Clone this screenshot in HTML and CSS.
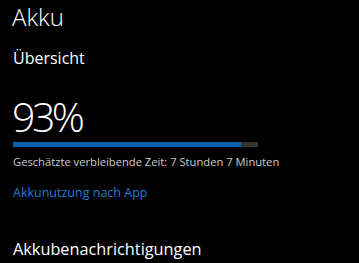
FILE: index.html
```html
<!DOCTYPE html>
<html lang="de">
<head>
<meta charset="utf-8">
<link rel="stylesheet" href="styles.css">
</head>
<body>
<main class="page">
  <h1 class="title">Akku</h1>
  <h2 class="section">Übersicht</h2>
  <div class="percent">93%</div>
  <div class="bar"><div class="fill" style="width:93%"></div></div>
  <p class="remaining">Geschätzte verbleibende Zeit: 7 Stunden 7 Minuten</p>
  <a class="link" href="#">Akkunutzung nach App</a>
  <h2 class="section notify">Akkubenachrichtigungen</h2>
</main>
</body>
</html>
```
FILE: styles.css
```css
html, body {
  margin: 0;
  padding: 0;
  background: #000;
  color: #fff;
  font-family: "Open Sans", "Noto Sans", sans-serif;
  overflow: hidden;
}
.page {
  padding: 0 0 0 13px;
  width: 346px;
  height: 263px;
  display: flex;
  flex-direction: column;
  align-items: flex-start;
}
.title {
  margin: 1px 0 0 -1px;
  font-size: 24px;
  font-weight: 300;
  line-height: 32px;
}
.section {
  margin: 15px 0 0 0;
  font-size: 16px;
  font-weight: 400;
  line-height: 20px;
}
.percent {
  margin: 25px 0 0 -1px;
  font-size: 41px;
  font-weight: 300;
  line-height: 46px;
  letter-spacing: -3.5px;
}
.bar {
  margin-top: 3px;
  width: 245px;
  height: 5px;
  background: #333;
}
.fill {
  height: 100%;
  background: #0063b1;
}
.remaining {
  margin: 7px 0 0 0;
  font-size: 11.2px;
  line-height: 16px;
  color: #ccc;
}
.link {
  margin-top: 15px;
  font-size: 12.5px;
  line-height: 16px;
  color: #1e7fd0;
  text-decoration: none;
}
.notify {
  margin-top: 38px;
  font-size: 16.3px;
}
```
